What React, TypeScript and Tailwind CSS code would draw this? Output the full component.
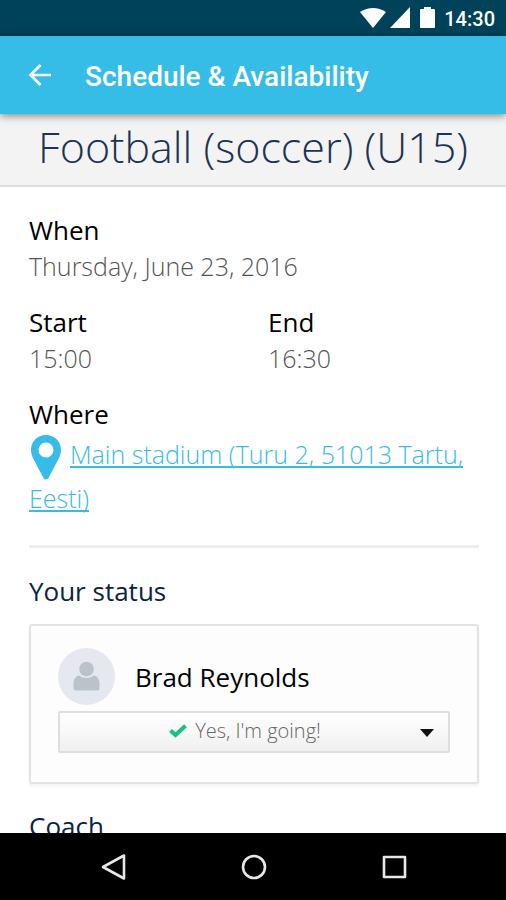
import type { ReactNode } from "react";

function StatusBar() {
  return (
    <div className="flex h-9 shrink-0 items-center justify-end bg-[#01425b] pr-[11px] text-white">
      <svg className="h-[22px] w-7" viewBox="0 0 28 22" fill="currentColor" aria-hidden="true">
        <path d="M1 5 Q14 -3 27 5 L14 21 Z" />
      </svg>
      <svg className="ml-[3px] h-[22px] w-5" viewBox="0 0 20 22" fill="currentColor" aria-hidden="true">
        <path d="M20 0 V21 H0 Z" />
      </svg>
      <svg className="ml-[10px] h-[22px] w-[15px]" viewBox="0 0 15 22" fill="currentColor" aria-hidden="true">
        <path d="M4 0 H11 V2 H14 Q15 2 15 3 V20 Q15 21 14 21 H1 Q0 21 0 20 V3 Q0 2 1 2 H4 Z" />
      </svg>
      <span className="ml-[9px] pt-[2px] font-[Roboto,sans-serif] text-[20px] leading-6 font-medium">14:30</span>
    </div>
  );
}

function AppBar() {
  return (
    <header className="z-10 flex h-[78px] shrink-0 items-center bg-[#35bde8] pl-7 text-white shadow-[0_2px_8px_rgba(0,0,0,0.45)]">
      <button type="button" aria-label="Back" className="h-6 w-6">
        <svg viewBox="0 0 24 24" fill="none" stroke="currentColor" strokeWidth="2.6" aria-hidden="true">
          <path d="M23 12 H3 M12.5 2 L2.5 12 L12.5 22" />
        </svg>
      </button>
      <h1 className="ml-[33px] pt-[3px] font-[Roboto,sans-serif] text-[28px] leading-9 font-medium">
        Schedule &amp; Availability
      </h1>
    </header>
  );
}

function Field({ label, children }: { label: string; children: ReactNode }) {
  return (
    <div>
      <dt className="text-[26px] text-black">{label}</dt>
      <dd className="font-light text-[#555]">{children}</dd>
    </div>
  );
}

function PinIcon() {
  return (
    <svg className="-my-2 mr-2 ml-[2px] inline-block h-[45px] w-[31px] align-middle" viewBox="0 0 31 45" aria-hidden="true">
      <path
        fill="#35bde8"
        fillRule="evenodd"
        d="M15 0 C6.5 0 0 6.6 0 15 C0 19 1.5 22 3 25 L12.5 43 Q15 46 17.5 43 L27 25 C28.5 22 30 19 30 15 C30 6.6 23.5 0 15 0 Z M15 7.5 A7.5 7.5 0 1 1 15 22.5 A7.5 7.5 0 1 1 15 7.5 Z"
      />
    </svg>
  );
}

function StatusCard() {
  return (
    <section className="mt-[15px] rounded-[3px] border-2 border-[#e3e3e3] bg-[#fdfdfd] px-[27px] pt-[22px] pb-[29px] shadow-[0_2px_3px_rgba(0,0,0,0.06)]">
      <div className="flex items-center">
        <svg className="h-[57px] w-[57px]" viewBox="0 0 57 57" aria-hidden="true">
          <circle cx="28.5" cy="28.5" r="28.5" fill="#e5e9ef" />
          <circle cx="28.5" cy="21" r="7.3" fill="#bac3c9" />
          <path
            fill="#bac3c9"
            d="M21 27.5 Q28.5 32.5 36 27.5 Q41 28.5 41.5 35 V40 Q41.5 42.5 39 42.5 H18 Q15.5 42.5 15.5 40 V35 Q16 28.5 21 27.5 Z"
          />
        </svg>
        <label htmlFor="attendance" className="ml-5 text-[26px] text-black">
          Brad Reynolds
        </label>
      </div>
      <div className="relative mt-[6px]">
        <select
          id="attendance"
          className="block h-[42px] w-full appearance-none rounded-[2px] border-2 border-[#dedede] bg-linear-to-b from-white to-[#f0f0f0] pb-1 pl-2 text-[20px] font-light text-[#666] [text-align-last:center]"
        >
          <option>Yes, I'm going!</option>
          <option>No, I can't come</option>
        </select>
        <svg
          className="pointer-events-none absolute top-[13px] left-1/2 -ml-[85px] h-[14px] w-[18px]"
          viewBox="0 0 18 14"
          fill="none"
          stroke="#17c283"
          strokeWidth="4"
          aria-hidden="true"
        >
          <path d="M1.5 6.5 L6.5 11 L16.5 1.8" />
        </svg>
        <svg className="pointer-events-none absolute top-[18px] right-4 h-2 w-[14px]" viewBox="0 0 14 8" aria-hidden="true">
          <path d="M0 0 H14 L7 8 Z" fill="#111" />
        </svg>
      </div>
    </section>
  );
}

function NavBar() {
  return (
    <nav className="z-10 flex h-[67px] shrink-0 items-center justify-center gap-[112px] bg-black pl-[2px] text-[#e8e8e8]">
      <button type="button" aria-label="Back" className="h-7 w-7">
        <svg viewBox="0 0 28 28" fill="none" stroke="currentColor" strokeWidth="2.6" strokeLinejoin="round" aria-hidden="true">
          <path d="M24 2.5 V25.5 L3 14 Z" />
        </svg>
      </button>
      <button type="button" aria-label="Home" className="h-7 w-7">
        <svg viewBox="0 0 28 28" fill="none" stroke="currentColor" strokeWidth="2.6" aria-hidden="true">
          <circle cx="14" cy="14" r="11" />
        </svg>
      </button>
      <button type="button" aria-label="Recent apps" className="h-7 w-7">
        <svg viewBox="0 0 28 28" fill="none" stroke="currentColor" strokeWidth="2.6" strokeLinejoin="round" aria-hidden="true">
          <rect x="4" y="4" width="21" height="20" />
        </svg>
      </button>
    </nav>
  );
}

export default function App() {
  return (
    <div className="flex h-screen flex-col overflow-hidden bg-white font-['Open_Sans',sans-serif] text-[25px] leading-9">
      <StatusBar />
      <AppBar />
      <main className="min-h-0 flex-1 overflow-hidden">
        <h2 className="border-b-2 border-[#dcdcdc] bg-[#f3f3f3] pt-[2px] pb-[7px] text-center text-[43px] leading-[62px] font-light text-[#1c3454]">
          Football (soccer) (U15)
        </h2>
        <div className="pt-[25px] pr-[27px] pl-[29px]">
          <dl className="flex flex-col gap-5">
            <Field label="When">Thursday, June 23, 2016</Field>
            <div className="grid grid-cols-[239px_1fr]">
              <Field label="Start">15:00</Field>
              <Field label="End">16:30</Field>
            </div>
            <div>
              <dt className="text-[26px] text-black">Where</dt>
              <dd className="leading-[44px] font-light">
                <PinIcon />
                <a
                  href="#map"
                  className="text-[#35bde8] underline decoration-2 underline-offset-2 [text-decoration-skip-ink:none]"
                >
                  Main stadium (Turu 2, 51013 Tartu, Eesti)
                </a>
              </dd>
            </div>
          </dl>
          <hr className="mt-[25px] border-t-[3px] border-[#eeeeee]" />
          <h3 className="mt-[25px] text-[26px] text-[#0c2340]">Your status</h3>
          <StatusCard />
          <h3 className="mt-6 text-[26px] text-[#0c2340]">Coach</h3>
        </div>
      </main>
      <NavBar />
    </div>
  );
}
